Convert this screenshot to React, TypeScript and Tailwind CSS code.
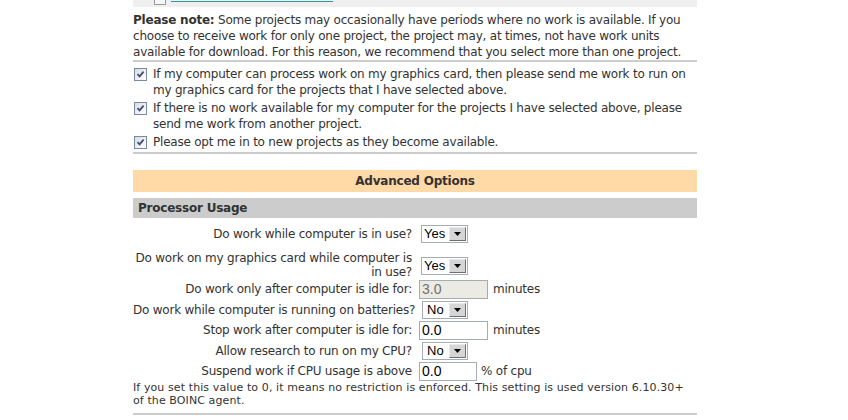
import React from "react";

function Check() {
  return (
    <span className="mt-[2px] ml-[1px] w-[13px] h-[13px] shrink-0 border border-[#7b8aa3] bg-gradient-to-br from-[#dcdcdc] to-white flex items-center justify-center">
      <svg width="9" height="9" viewBox="0 0 9 9">
        <path d="M1.5 4.2 L3.6 6.4 L7.6 1.6" stroke="#3d4f7c" strokeWidth="1.8" fill="none" />
      </svg>
    </span>
  );
}

function Select({ value, wide }: { value: string; wide: boolean }) {
  return (
    <div
      className={
        (wide ? "w-[47px] ml-[2px]" : "w-[46px] ml-[3px]") +
        " h-[18px] border border-[#a5acb2] bg-white flex items-stretch font-['Liberation_Sans',sans-serif] text-[13px] tracking-normal text-black"
      }
    >
      <span className={(wide ? "pl-[2px]" : "pl-[4px]") + " flex-1 leading-[16px]"}>{value}</span>
      <span className="w-[17px] m-[1px] border-t border-l border-t-[#e8e8e8] border-l-[#e8e8e8] border-r border-b border-r-[#6f6f6f] border-b-[#6f6f6f] bg-[#d6d6d6] flex items-center justify-center">
        <svg width="7" height="4" viewBox="0 0 7 4">
          <path d="M0 0 H7 L3.5 4 Z" fill="#000" />
        </svg>
      </span>
    </div>
  );
}

function Input({ value, disabled, w }: { value: string; disabled?: boolean; w: string }) {
  return (
    <div
      className={
        w +
        " h-[19px] border border-[#a5acb2] pl-[2px] leading-[17px] font-['Liberation_Sans',sans-serif] text-[14px] tracking-normal " +
        (disabled ? "bg-[#ebebe4] text-[#707070]" : "bg-white text-black")
      }
    >
      {value}
    </div>
  );
}

export default function App() {
  return (
    <div className="w-[848px] h-[420px] bg-white overflow-hidden font-['DejaVu_Sans',Verdana,sans-serif] text-[12px] tracking-[-0.22px] text-[#333]">
      <div className="ml-[133px] w-[564px]">
        {/* cropped strip at the top */}
        <div className="h-[7px] bg-[#efefef] overflow-hidden flex items-start pl-[21px]">
          <div className="-mt-[8px] w-[12px] h-[13px] border border-[#9a9a9a] bg-[#f7f7f7]" />
          <div className="ml-[5px] mt-[1px] w-[162px] h-[1px] bg-[#2a9a9e]" />
        </div>

        <p className="mt-[5px] leading-[16px] whitespace-nowrap">
          <b>Please note:</b> Some projects may occasionally have periods where no work is available. If you
          <br />
          choose to receive work for only one project, the project may, at times, not have work units
          <br />
          available for download. For this reason, we recommend that you select more than one project.
        </p>
        <div className="h-[2px] bg-[#cccccc]" />

        <div className="pt-[4px] pb-[2px] flex flex-col gap-[2px] leading-[16px] whitespace-nowrap">
          <div className="flex items-start gap-[6px]">
            <Check />
            <div>
              If my computer can process work on my graphics card, then please send me work to run on
              <br />
              my graphics card for the projects that I have selected above.
            </div>
          </div>
          <div className="flex items-start gap-[6px]">
            <Check />
            <div>
              If there is no work available for my computer for the projects I have selected above, please
              <br />
              send me work from another project.
            </div>
          </div>
          <div className="flex items-start gap-[6px]">
            <Check />
            <div>Please opt me in to new projects as they become available.</div>
          </div>
        </div>
        <div className="h-[2px] bg-[#cccccc]" />

        <div className="mt-[16px] h-[22px] bg-[#ffd9a6] flex items-center justify-center font-bold">
          Advanced Options
        </div>
        <div className="mt-[6px] h-[20px] bg-[#cccccc] flex items-center pl-[5px] font-bold">
          Processor Usage
        </div>

        <div className="mt-[5px] flex flex-col leading-[14px] whitespace-nowrap">
          <div className="h-[22px] flex items-center">
            <div className="w-[279px] text-right">Do work while computer is in use?</div>
            <div className="pl-[7px]">
              <Select value="Yes" wide />
            </div>
          </div>
          <div className="h-[34px] flex items-end">
            <div className="w-[279px] text-right">
              Do work on my graphics card while computer is
              <br />
              in use?
            </div>
            <div className="pl-[7px] mb-[4px]">
              <Select value="Yes" wide />
            </div>
          </div>
          <div className="h-[20px] flex items-center">
            <div className="w-[279px] text-right">Do work only after computer is idle for:</div>
            <div className="pl-[7px] flex items-center">
              <Input value="3.0" disabled w="w-[69px]" />
              <span className="ml-[5px]">minutes</span>
            </div>
          </div>
          <div className="h-[21px] flex items-center">
            <div className="w-[279px] text-right">Do work while computer is running on batteries?</div>
            <div className="pl-[7px]">
              <Select value="No" wide={false} />
            </div>
          </div>
          <div className="h-[20px] flex items-center">
            <div className="w-[279px] text-right">Stop work after computer is idle for:</div>
            <div className="pl-[7px] flex items-center">
              <Input value="0.0" w="w-[69px]" />
              <span className="ml-[5px]">minutes</span>
            </div>
          </div>
          <div className="h-[21px] flex items-center">
            <div className="w-[279px] text-right">Allow research to run on my CPU?</div>
            <div className="pl-[7px]">
              <Select value="No" wide={false} />
            </div>
          </div>
          <div className="h-[20px] flex items-center">
            <div className="w-[279px] text-right">Suspend work if CPU usage is above</div>
            <div className="pl-[7px] flex items-center">
              <Input value="0.0" w="w-[58px]" />
              <span className="ml-[4px]">% of cpu</span>
            </div>
          </div>
        </div>

        <p className="text-[11px] leading-[13px] tracking-[0.1px] whitespace-nowrap">
          If you set this value to 0, it means no restriction is enforced. This setting is used version 6.10.30+
          <br />
          of the BOINC agent.
        </p>
        <div className="mt-[6px] h-[2px] bg-[#cccccc]" />
      </div>
    </div>
  );
}
